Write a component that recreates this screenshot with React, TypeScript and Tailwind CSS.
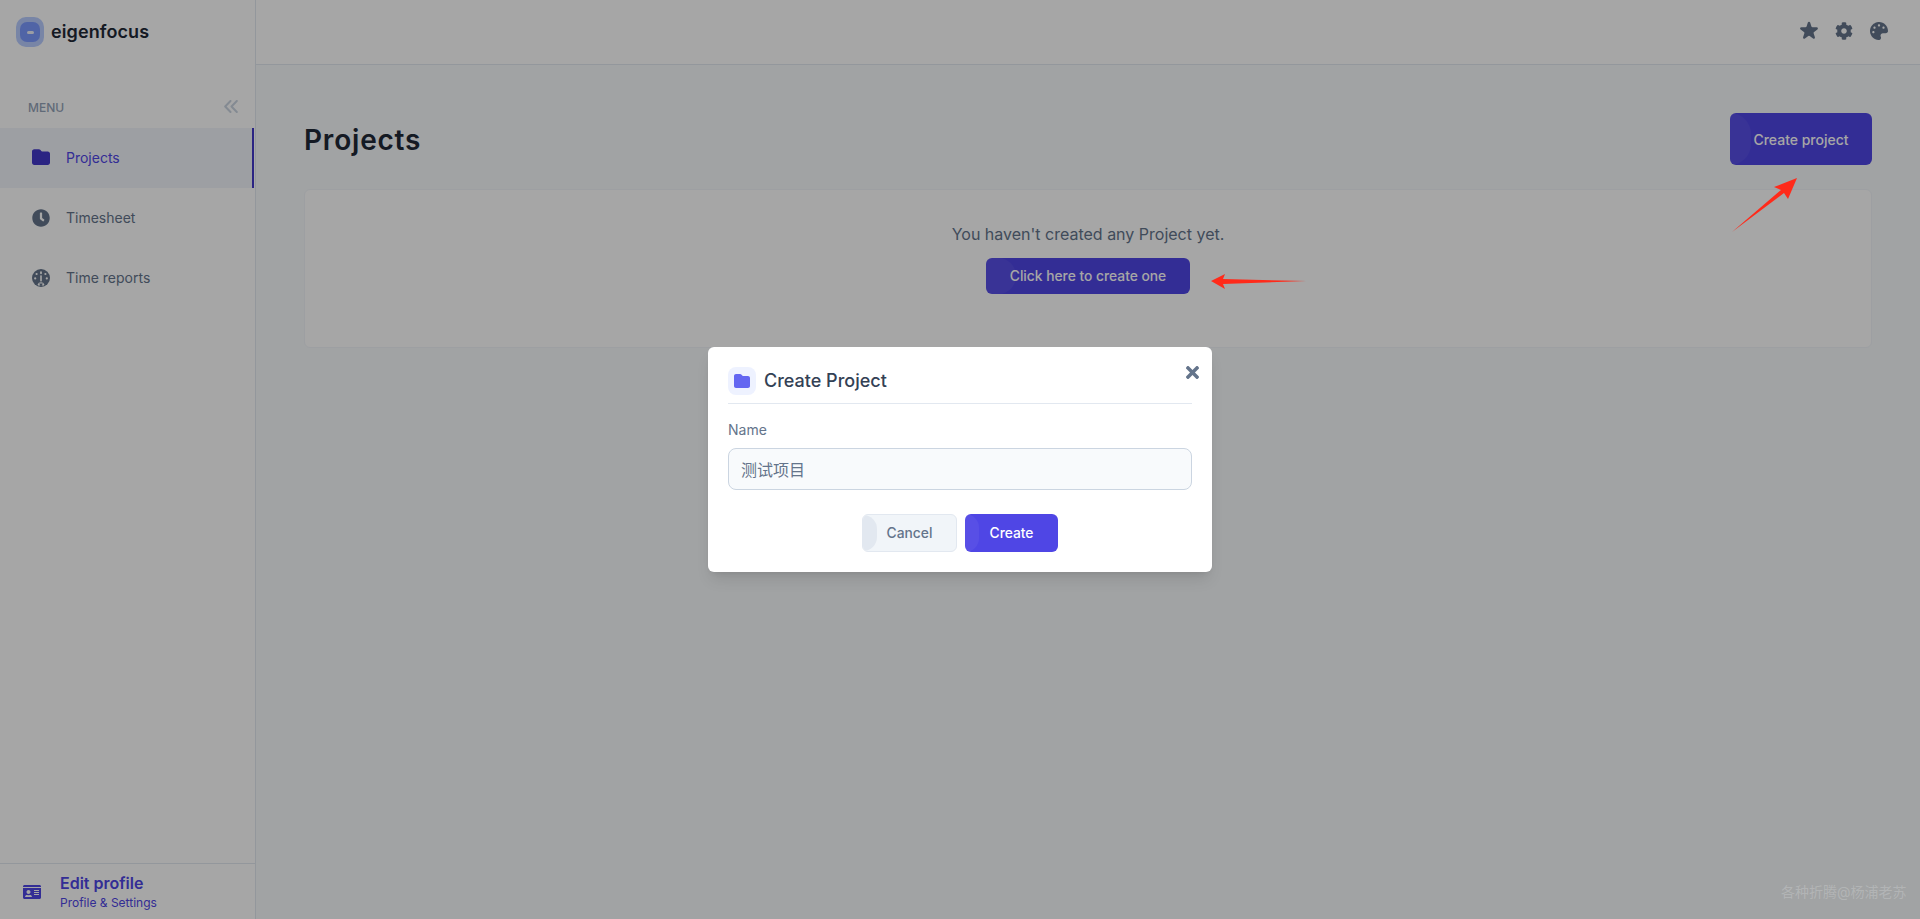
import { FaClock, FaCog, FaPalette, FaIdCard, FaTimes } from "react-icons/fa";
import { FaFolder } from "react-icons/fa6";
import { HiStar } from "react-icons/hi";

function Arc({ className }: { className: string }) {
  return <span className={`absolute left-0 top-0 h-full rounded-r-full ${className}`} />;
}

function Gauge() {
  return (
    <svg width="18" height="18" viewBox="0 0 18 18" className="block">
      <circle cx="9" cy="9" r="9" fill="currentColor" />
      <rect x="8.1" y="2.2" width="1.8" height="3" rx="0.9" fill="#fff" />
      <circle cx="4.6" cy="5" r="1.1" fill="#fff" />
      <circle cx="13.4" cy="5" r="1.1" fill="#fff" />
      <circle cx="3.2" cy="9.4" r="1.1" fill="#fff" />
      <circle cx="14.8" cy="9.4" r="1.1" fill="#fff" />
      <rect x="8.2" y="6.4" width="1.6" height="6" fill="#fff" />
      <path d="M5.6 15.6 A3.6 3.6 0 0 1 12.4 15.6 L12 16.6 L6 16.6 Z" fill="#fff" />
      <path d="M7.2 14.6 L10.8 14.6 L9 18 Z" fill="currentColor" />
    </svg>
  );
}

function NavItem({ icon, label, active }: { icon: React.ReactNode; label: string; active?: boolean }) {
  return (
    <div className={`flex h-[60px] items-center gap-[16px] pl-[32px] text-[14px] leading-5 ${active ? "mr-[1px] border-r-[2px] border-[#4338ca] bg-[#f2f4fb] text-[#4f46e5]" : "text-[#64748b]"}`}>
      <span className={`text-[18px] ${active ? "-mt-[2px] text-[#4338ca]" : "text-[#64748b]"}`}>{icon}</span>
      <span>{label}</span>
    </div>
  );
}

export default function App() {
  return (
    <div className="relative flex h-[919px] w-[1920px] overflow-hidden bg-[#fafafa] text-[#1f2937]" style={{ fontFamily: '"Inter", "Noto Sans CJK SC", sans-serif' }}>
      <aside className="flex w-[256px] shrink-0 flex-col border-r border-[#e2e8f0] bg-white">
        <div className="flex h-[64px] items-center gap-[7px] pl-[16px]">
          <div className="flex h-[30px] w-[28px] items-center justify-center rounded-[10px] bg-[#b8ccff]">
            <div className="flex h-[20px] w-[20px] items-center justify-center rounded-[7px] bg-[#7b9aff]">
              <div className="h-[3px] w-[7px] rounded-full bg-[#eef1fc]" />
            </div>
          </div>
          <span className="text-[18px] font-semibold leading-7 tracking-[0.1px] text-[#1f2937]">eigenfocus</span>
        </div>
        <div className="mt-[27px] flex h-[34px] items-center justify-between pl-[28px] pr-[17px]">
          <span className="text-[12px] font-medium text-[#94a3b8]">MENU</span>
          <svg width="14" height="13" viewBox="0 0 14 13" fill="none" stroke="#cbd5e1" strokeWidth="2" strokeLinecap="round" strokeLinejoin="round" className="mb-[3px]">
            <polyline points="6.5,1 1.2,6.5 6.5,12" />
            <polyline points="12.8,1 7.5,6.5 12.8,12" />
          </svg>
        </div>
        <div className="mt-[3px]">
          <NavItem active icon={<FaFolder />} label="Projects" />
          <NavItem icon={<FaClock />} label="Timesheet" />
          <NavItem icon={<Gauge />} label="Time reports" />
        </div>
        <div className="mt-auto flex h-[56px] items-center gap-[19px] border-t border-[#e2e8f0] pl-[23px]">
          <FaIdCard className="text-[18px] text-[#4f46e5]" />
          <div className="flex flex-col">
            <span className="text-[16px] font-semibold leading-[21px] text-[#4f46e5]">Edit profile</span>
            <span className="text-[12px] leading-[17px] text-[#4f46e5]">Profile &amp; Settings</span>
          </div>
        </div>
      </aside>
      <div className="flex min-w-0 flex-1 flex-col">
        <header className="flex h-[65px] items-center justify-end gap-[17px] border-b border-[#e2e8f0] bg-white pb-[2px] pr-[32px] text-[18px] text-[#64748b]">
          <HiStar size={24} className="-mx-[3px]" />
          <FaCog />
          <FaPalette />
        </header>
        <main className="flex-1 bg-[#f8fafc] pl-[48px] pr-[48px]">
          <div className="mt-[48px] flex h-[52px] items-center justify-between">
            <h1 className="pt-[2px] text-[28px] font-semibold leading-9 tracking-[0.8px] text-[#1f2937]">Projects</h1>
            <button className="relative h-[52px] w-[142px] overflow-hidden rounded-md bg-[#4f46e5] text-[14px] font-medium text-white">
              <Arc className="w-[21px] bg-white/5" />
              <span className="relative">Create project</span>
            </button>
          </div>
          <section className="mt-[24px] flex h-[159px] flex-col items-center rounded-md border border-[#f1f5f9] bg-white pt-[33px]">
            <p className="text-[16px] leading-[22px] text-[#64748b]">You haven't created any Project yet.</p>
            <button className="relative mt-[13px] h-[36px] w-[204px] overflow-hidden rounded-md bg-[#4f46e5] text-[13.8px] font-medium text-white">
              <Arc className="w-[30px] bg-white/5" />
              <span className="relative">Click here to create one</span>
            </button>
          </section>
        </main>
      </div>

      <div className="absolute inset-0 flex items-center justify-center bg-black/35">
        <div className="relative w-[504px] rounded-md bg-white px-[20px] pb-[20px] pt-[20px] shadow-lg">
          <button className="absolute right-[10px] top-[16px] text-[19px] text-[#64748b]"><FaTimes /></button>
          <div className="flex h-[37px] items-start gap-[8px] border-b border-[#e2e8f0]">
            <div className="flex h-[28px] w-[28px] items-center justify-center rounded-lg bg-[#eef2ff] text-[16px] text-[#6366f1]"><FaFolder /></div>
            <h2 className="text-[18px] font-medium leading-[28px] text-[#334155]">Create Project</h2>
          </div>
          <label className="mt-[16px] block text-[14px] leading-5 text-[#64748b]">Name</label>
          <div className="mt-[8px] flex h-[42px] items-center rounded-lg border border-[#cbd5e1] bg-[#f8fafc] px-[12px] pt-[1px] text-[16px] text-[#64748b]">测试项目</div>
          <div className="mt-[24px] flex justify-center gap-[8px]">
            <button className="relative h-[38px] w-[95px] overflow-hidden rounded-md border border-[#e2e8f0] bg-[#f1f5f9] pt-[1px] text-[13.8px] font-medium text-[#64748b]">
              <Arc className="w-[14px] bg-[#e2e8f0]" />
              <span className="relative">Cancel</span>
            </button>
            <button className="relative h-[38px] w-[93px] overflow-hidden rounded-md bg-[#4f46e5] pt-[1px] text-[13.8px] font-medium text-white">
              <Arc className="w-[14px] bg-white/5" />
              <span className="relative">Create</span>
            </button>
          </div>
        </div>
      </div>

      <svg className="absolute left-[1732px] top-[176px]" width="68" height="56" viewBox="0 0 68 56">
        <polygon points="0,56 49,14 42,11 65,2 56,23 52,17" fill="#ff2a1a" />
      </svg>
      <svg className="absolute left-[1210px] top-[272px]" width="96" height="20" viewBox="0 0 96 20">
        <polygon points="1,9 15,2 13,7 96,9 13,12 15,17" fill="#ff2a1a" />
      </svg>
      <span className="absolute left-[1781px] top-[883px] text-[14px] leading-[18px] text-white/20">各种折腾@杨浦老苏</span>
    </div>
  );
}
